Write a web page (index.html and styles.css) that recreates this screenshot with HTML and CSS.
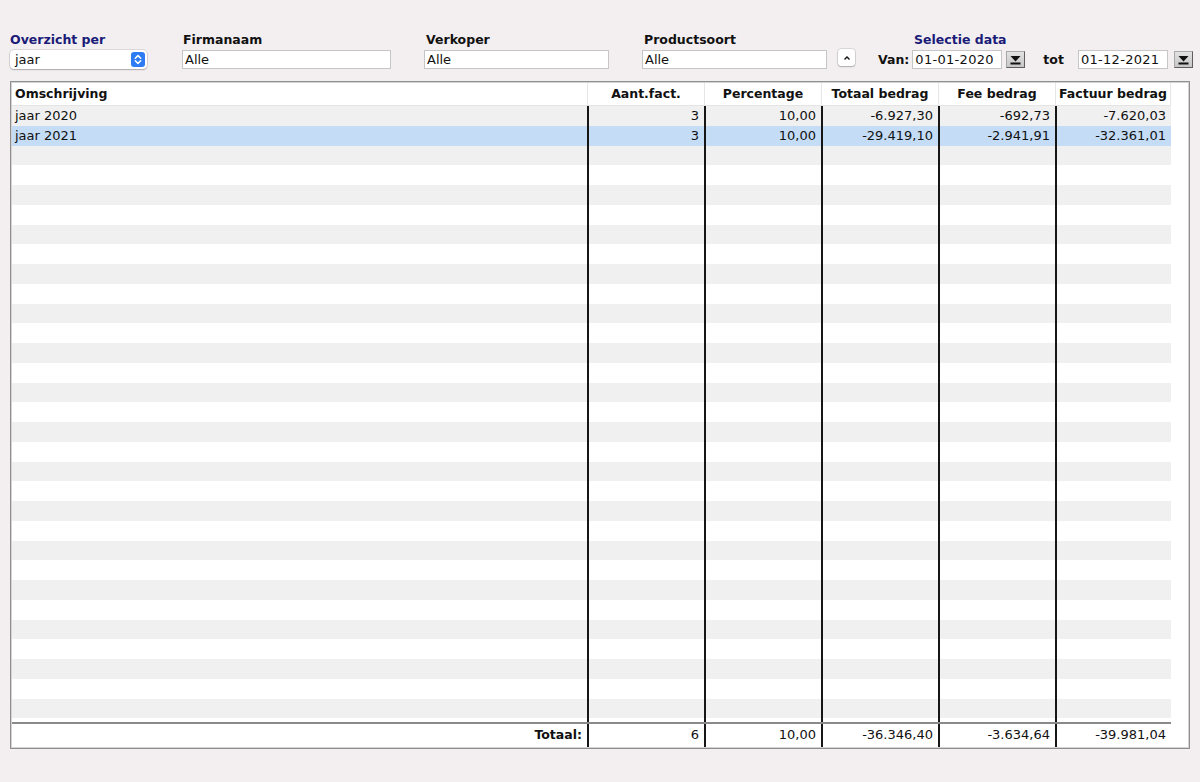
FILE: index.html
```html
<!DOCTYPE html>
<html lang="nl">
<head>
<meta charset="utf-8">
<title>Overzicht</title>
<link rel="stylesheet" href="styles.css">
</head>
<body>
<div class="toolbar">
  <div class="field f-overzicht">
    <div class="label navy">Overzicht per</div>
    <div class="select">
      <span>jaar</span>
      <svg class="sel-icon" width="14" height="15" viewBox="0 0 14 15"><rect x="0" y="0" width="14" height="15" rx="3" fill="#2d7cf3"/><path d="M4.3 6.2 L7 3.6 L9.7 6.2 M4.3 8.8 L7 11.4 L9.7 8.8" stroke="#fff" stroke-width="1.5" fill="none" stroke-linecap="round" stroke-linejoin="round"/></svg>
    </div>
  </div>
  <div class="field f-firma">
    <div class="label">Firmanaam</div>
    <div class="input w209">Alle</div>
  </div>
  <div class="field f-verkoper">
    <div class="label">Verkoper</div>
    <div class="input w185">Alle</div>
  </div>
  <div class="field f-product">
    <div class="label">Productsoort</div>
    <div class="input w185">Alle</div>
  </div>
  <div class="upbtn">
    <svg width="8" height="6" viewBox="0 0 8 6"><path d="M1.5 4.5 L4 2 L6.5 4.5" stroke="#111" stroke-width="1.4" fill="none"/></svg>
  </div>
  <div class="field f-data">
    <div class="label navy data-label">Selectie data</div>
    <div class="daterow">
      <span class="blabel">Van:</span>
      <div class="input date">01-01-2020</div>
      <div class="dbtn"><svg width="17" height="15" viewBox="0 0 17 15"><path d="M3.5 4 H13.5 L8.5 9.5 Z" fill="#111"/><rect x="3.5" y="10.5" width="10" height="2" fill="#111"/></svg></div>
      <span class="blabel tot">tot</span>
      <div class="input date">01-12-2021</div>
      <div class="dbtn d2"><svg width="17" height="15" viewBox="0 0 17 15"><path d="M3.5 4 H13.5 L8.5 9.5 Z" fill="#111"/><rect x="3.5" y="10.5" width="10" height="2" fill="#111"/></svg></div>
    </div>
  </div>
</div>

<div class="grid-box">
  <div class="head">
    <div class="hc left">Omschrijving</div>
    <div class="hc">Aant.fact.</div>
    <div class="hc">Percentage</div>
    <div class="hc">Totaal bedrag</div>
    <div class="hc">Fee bedrag</div>
    <div class="hc">Factuur bedrag</div>
  </div>
  <div class="rows">
    <div class="row"><i class="t">jaar 2020</i><i>3</i><i>10,00</i><i>-6.927,30</i><i>-692,73</i><i>-7.620,03</i></div>
    <div class="row sel"><i class="t">jaar 2021</i><i>3</i><i>10,00</i><i>-29.419,10</i><i>-2.941,91</i><i>-32.361,01</i></div>
    <div class="row"><i></i><i></i><i></i><i></i><i></i><i></i></div>
    <div class="row"><i></i><i></i><i></i><i></i><i></i><i></i></div>
    <div class="row"><i></i><i></i><i></i><i></i><i></i><i></i></div>
    <div class="row"><i></i><i></i><i></i><i></i><i></i><i></i></div>
    <div class="row"><i></i><i></i><i></i><i></i><i></i><i></i></div>
    <div class="row"><i></i><i></i><i></i><i></i><i></i><i></i></div>
    <div class="row"><i></i><i></i><i></i><i></i><i></i><i></i></div>
    <div class="row"><i></i><i></i><i></i><i></i><i></i><i></i></div>
    <div class="row"><i></i><i></i><i></i><i></i><i></i><i></i></div>
    <div class="row"><i></i><i></i><i></i><i></i><i></i><i></i></div>
    <div class="row"><i></i><i></i><i></i><i></i><i></i><i></i></div>
    <div class="row"><i></i><i></i><i></i><i></i><i></i><i></i></div>
    <div class="row"><i></i><i></i><i></i><i></i><i></i><i></i></div>
    <div class="row"><i></i><i></i><i></i><i></i><i></i><i></i></div>
    <div class="row"><i></i><i></i><i></i><i></i><i></i><i></i></div>
    <div class="row"><i></i><i></i><i></i><i></i><i></i><i></i></div>
    <div class="row"><i></i><i></i><i></i><i></i><i></i><i></i></div>
    <div class="row"><i></i><i></i><i></i><i></i><i></i><i></i></div>
    <div class="row"><i></i><i></i><i></i><i></i><i></i><i></i></div>
    <div class="row"><i></i><i></i><i></i><i></i><i></i><i></i></div>
    <div class="row"><i></i><i></i><i></i><i></i><i></i><i></i></div>
    <div class="row"><i></i><i></i><i></i><i></i><i></i><i></i></div>
    <div class="row"><i></i><i></i><i></i><i></i><i></i><i></i></div>
    <div class="row"><i></i><i></i><i></i><i></i><i></i><i></i></div>
    <div class="row"><i></i><i></i><i></i><i></i><i></i><i></i></div>
    <div class="row"><i></i><i></i><i></i><i></i><i></i><i></i></div>
    <div class="row"><i></i><i></i><i></i><i></i><i></i><i></i></div>
    <div class="row"><i></i><i></i><i></i><i></i><i></i><i></i></div>
    <div class="row"><i></i><i></i><i></i><i></i><i></i><i></i></div>
    <div class="row filler"><i></i><i></i><i></i><i></i><i></i><i></i></div>
  </div>
  <div class="row totals"><i class="tl">Totaal:</i><i>6</i><i>10,00</i><i>-36.346,40</i><i>-3.634,64</i><i>-39.981,04</i></div>
</div>
</body>
</html>
```

FILE: styles.css
```css
* { box-sizing: border-box; }
html, body { margin: 0; padding: 0; }
body {
  width: 1200px;
  height: 782px;
  background: #f3eff0;
  font-family: "DejaVu Sans", "Liberation Sans", sans-serif;
  font-size: 13px;
  color: #111;
  overflow: hidden;
}

/* toolbar */
.toolbar {
  display: flex;
  align-items: flex-end;
  padding: 31px 0 0 10px;
}
.field {
  display: flex;
  flex-direction: column;
  gap: 2px;
}
.label {
  font-weight: bold;
  font-size: 12.5px;
  height: 17px;
  line-height: 17px;
  white-space: nowrap;
}
.navy { color: #1b1b78; }
.f-firma { margin-left: 35px; }
.f-firma .label { margin-left: 1px; }
.f-verkoper { margin-left: 33px; }
.f-verkoper .label { margin-left: 2px; }
.f-product { margin-left: 33px; }
.f-product .label { margin-left: 2px; }

.select {
  width: 137px;
  height: 19px;
  background: #fff;
  border-radius: 4px;
  box-shadow: 0 0 0 0.5px rgba(0,0,0,0.18), 0 1px 1.5px rgba(0,0,0,0.22);
  display: flex;
  align-items: center;
  justify-content: space-between;
  padding: 0 2px 0 5px;
  line-height: 19px;
}
.sel-icon { display: block; }

.input {
  height: 19px;
  background: #fff;
  border: 1px solid #c6c6c6;
  line-height: 17px;
  padding-left: 2px;
  white-space: nowrap;
}
.w209 { width: 209px; }
.w185 { width: 185px; }

.upbtn {
  margin-left: 11px;
  margin-bottom: 3px;
  width: 17px;
  height: 17px;
  background: #fff;
  border-radius: 3px;
  box-shadow: 0 0 0 0.5px rgba(0,0,0,0.2), 0 1px 1.5px rgba(0,0,0,0.2);
  display: flex;
  align-items: center;
  justify-content: center;
}
.upbtn svg { display: block; }

.f-data { margin-left: 23px; }
.data-label { margin-left: 36px; }
.daterow {
  display: flex;
  align-items: center;
  height: 19px;
}
.blabel {
  font-weight: bold;
  font-size: 12.5px;
  line-height: 19px;
}
.date {
  width: 90px;
  margin-left: 3px;
  padding-left: 2px;
  letter-spacing: 0.3px;
}
.dbtn {
  width: 19px;
  height: 17px;
  margin-left: 4px;
  background: linear-gradient(#e2e2e2, #c6c6c6);
  border: 1px solid #5e5e5e;
  border-top-color: #a8a8a8;
  border-left-color: #a8a8a8;
  display: flex;
  align-items: center;
  justify-content: center;
}
.dbtn svg { display: block; }
.d2 { margin-left: 6px; }
.tot { margin-left: 18px; margin-right: 11px; }

/* grid */
.grid-box {
  margin: 12px 0 0 10px;
  width: 1180px;
  height: 668px;
  background: #fff;
  border: 1px solid #8f8f8f;
  box-shadow: inset 0 0 0 1px #d4d4d4;
  padding: 1px;
  display: flex;
  flex-direction: column;
}
.head, .row {
  display: grid;
  grid-template-columns: 575px 117px 117px 117px 117px 116px;
  width: 1159px;
}
.head {
  height: 23px;
  border-bottom: 1px solid #e4e4e4;
  background: #fff;
}
.hc {
  font-weight: bold;
  font-size: 12.5px;
  text-align: center;
  line-height: 22px;
  border-left: 1px solid #e6e6e6;
  white-space: nowrap;
}
.hc.left {
  text-align: left;
  padding-left: 3px;
  border-left: none;
}
.hc:last-child { border-right: 1px solid #e6e6e6; }

.rows {
  flex: 1;
  display: flex;
  flex-direction: column;
}
.row { height: 19.75px; background: #fff; }
.rows .row:nth-child(odd) { background: #f0f0f0; }
.rows .row.sel { background: #c4dcf6; }
.row i {
  font-style: normal;
  text-align: right;
  padding: 0 5px 0 2px;
  line-height: 19.75px;
  border-left: 2px solid #161616;
  white-space: nowrap;
  overflow: hidden;
}
.row i:first-child { border-left: none; }
.row i.t { text-align: left; padding-left: 3px; }
.rows .row.filler {
  flex: 1;
  height: auto;
  background: #fff;
}
.totals {
  height: 25px;
  background: #fff;
  border-top: 2px solid #8a8a8a;
}
.totals i { line-height: 22px; }
.totals i.tl { font-weight: bold; font-size: 12.5px; }
```
